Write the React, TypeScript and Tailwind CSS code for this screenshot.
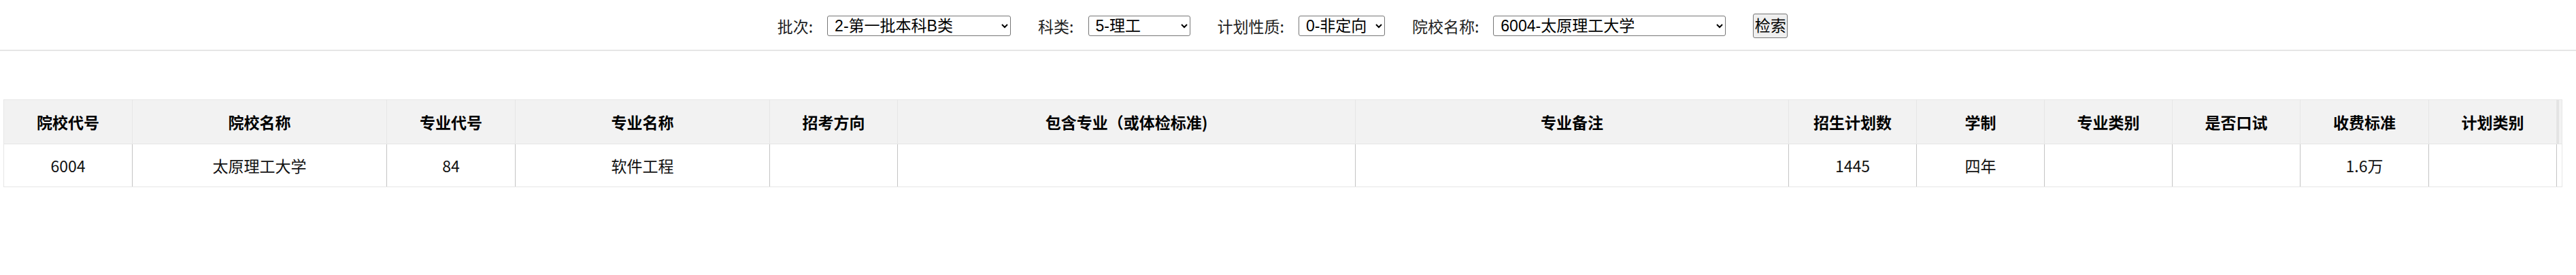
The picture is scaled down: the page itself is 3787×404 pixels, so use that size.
import React from 'react';

const filters = [
  { label: '批次:', value: '2-第一批本科B类', width: 'w-[270px]' },
  { label: '科类:', value: '5-理工', width: 'w-[150px]' },
  { label: '计划性质:', value: '0-非定向', width: 'w-[127px]' },
  { label: '院校名称:', value: '6004-太原理工大学', width: 'w-[342px]' },
];

const headers = [
  '院校代号',
  '院校名称',
  '专业代号',
  '专业名称',
  '招考方向',
  '包含专业（或体检标准)',
  '专业备注',
  '招生计划数',
  '学制',
  '专业类别',
  '是否口试',
  '收费标准',
  '计划类别',
];

const row = ['6004', '太原理工大学', '84', '软件工程', '', '', '', '1445', '四年', '', '', '1.6万', ''];

const cols =
  'grid grid-cols-[189px_374px_189px_374px_188px_673px_637px_188px_188px_188px_188px_189px_188px_7px]';

const App = () => {
  return (
    <div className="w-[3787px] h-[404px] bg-white font-['Noto_Sans_CJK_SC',sans-serif] text-black">
      {/* Search bar */}
      <div className="h-[73px] pt-[20px] pr-[16px] flex justify-center items-start">
        <div className="h-[36px] flex items-center gap-[40px] text-[23px] leading-none">
          {filters.map((f) => (
            <div key={f.label} className="flex items-center gap-[21px]">
              <span className="text-[#222]">{f.label}</span>
              <select
                defaultValue={f.value}
                className={`${f.width} h-[30px] py-0 pl-[6px] border border-[#767676] rounded-[3px] bg-white font-['Liberation_Sans','Noto_Sans_CJK_SC',sans-serif] text-[23px] leading-[28px] text-black`}
              >
                <option>{f.value}</option>
              </select>
            </div>
          ))}
          <button className="h-[36px] w-[51px] border border-[#767676] rounded-[3px] bg-[#efefef] font-['Liberation_Sans','Noto_Sans_CJK_SC',sans-serif] text-[23px] leading-[28px] text-black">
            检索
          </button>
        </div>
      </div>
      <div className="h-[2px] bg-[#e6e6e6]" />

      {/* Result table */}
      <div className="mt-[71px] ml-[5px] w-[3762px] border border-[#e6e6e6] text-[23px]">
        <div className={`${cols} h-[65px] bg-[#f2f2f2] border-b border-[#e6e6e6] font-bold`}>
          {headers.map((h) => (
            <div key={h} className="flex items-center justify-center border-r border-[#e6e6e6]">
              {h}
            </div>
          ))}
          <div className="border-l-[3px] border-[#e3e3e3]" />
        </div>
        <div className={`${cols} h-[62px] text-[#111]`}>
          {row.map((v, i) => (
            <div
              key={i}
              className="flex items-center justify-center border-r border-[#c4c4c4]"
            >
              {v}
            </div>
          ))}
          <div />
        </div>
      </div>
    </div>
  );
};

export default App;
